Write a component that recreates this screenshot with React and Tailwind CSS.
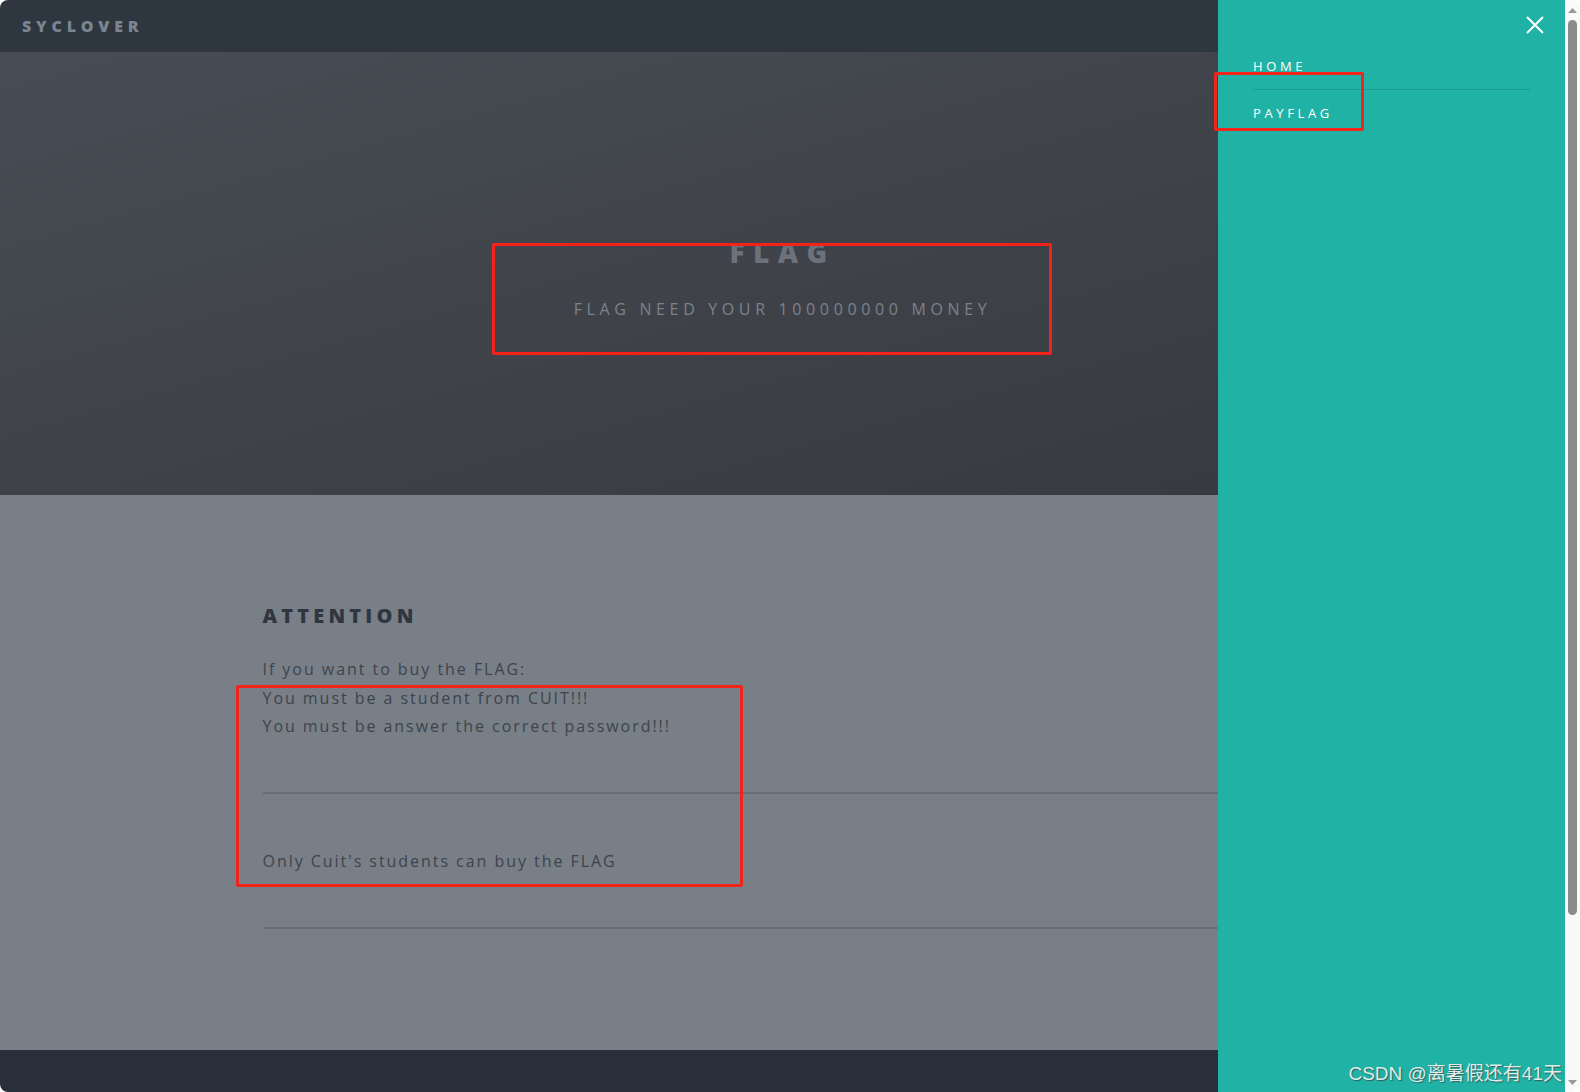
import React from "react";

const font = { fontFamily: '"Open Sans", "Noto Sans", sans-serif' };

function RedBox({ className }) {
  return <div className={"absolute border-[3px] border-[#f2231b] rounded-[2px] pointer-events-none " + className} />;
}

export default function App() {
  return (
    <div className="w-[1580px] h-[1092px] bg-white overflow-hidden">
      <div className="w-full h-full rounded-[8px] overflow-hidden flex" style={font}>
        <div className="relative flex-1 flex flex-col h-full">
          {/* header */}
          <header className="h-[52px] bg-[#2e3640] flex items-center pl-[22px] shrink-0">
            <span className="text-[16px] font-extrabold tracking-[0.3em] text-[#7b8591]">SYCLOVER</span>
          </header>
          {/* hero */}
          <section className="h-[443px] shrink-0 bg-gradient-to-br from-[#484d55] to-[#36383c] flex flex-col items-center pt-[184px]">
            <h1 className="text-[28px] leading-[32px] font-extrabold tracking-[0.3em] text-[#6b727c]">FLAG</h1>
            <p className="mt-[29px] text-[16px] leading-[24px] tracking-[0.29em] text-[#7b828d]">FLAG NEED YOUR 100000000 MONEY</p>
          </section>
          {/* content */}
          <section className="flex-1 bg-[#787f87]">
            <div className="mx-auto w-[1040px] pt-[107px]">
              <h2 className="text-[20px] leading-[28px] font-extrabold tracking-[0.21em] text-[#2f3640]">ATTENTION</h2>
              <div className="mt-[25px] text-[16px] leading-[28.5px] tracking-[0.122em] text-[#3d444d]">
                <p>If you want to buy the FLAG:</p>
                <p>You must be a student from CUIT!!!</p>
                <p>You must be answer the correct password!!!</p>
              </div>
              <div className="mt-[51px] h-[2px] bg-[#676e77]" />
              <p className="mt-[53px] text-[16px] leading-[28px] tracking-[0.122em] text-[#3d444d]">Only Cuit's students can buy the FLAG</p>
              <div className="mt-[52px] h-[2px] bg-[#676e77]" />
            </div>
          </section>
          {/* footer */}
          <footer className="h-[42px] bg-[#282f3a] shrink-0" />

          {/* side menu overlay */}
          <aside className="absolute top-0 right-0 w-[347px] h-full bg-[#20b2a4] px-[35px] pt-[54px]">
            <button className="absolute top-[15px] right-[20px] text-white">
              <svg width="20" height="20" viewBox="0 0 20 20" fill="none" stroke="currentColor" strokeWidth="2">
                <path d="M2 2 L18 18 M18 2 L2 18" />
              </svg>
            </button>
            <nav className="text-white text-[13px] font-medium tracking-[0.28em]">
              <div className="h-[24px] leading-[24px]">HOME</div>
              <div className="mt-[11px] h-px bg-[#1a9b8f]" />
              <div className="mt-[11px] h-[24px] leading-[24px]">PAYFLAG</div>
            </nav>
            <div
              className="absolute right-[3px] bottom-[6px] text-[19px] leading-[24px] text-[#dfece9]"
              style={{ fontFamily: '"Liberation Sans", "Noto Sans CJK SC", sans-serif', textShadow: "1px 1px 1px rgba(60,60,60,0.7)" }}
            >
              CSDN @离暑假还有41天
            </div>
          </aside>

          <RedBox className="left-[492px] top-[243px] w-[560px] h-[112px]" />
          <RedBox className="left-[1214px] top-[72px] w-[150px] h-[59px]" />
          <RedBox className="left-[236px] top-[685px] w-[507px] h-[202px]" />
        </div>
        {/* scrollbar */}
        <div className="w-[15px] h-full bg-[#f9f9f9] flex flex-col items-center shrink-0">
          <div className="h-[20px] flex items-center justify-center">
            <svg width="9" height="5" viewBox="0 0 9 5"><path d="M0 5 L4.5 0 L9 5 Z" fill="#9a9a9a" /></svg>
          </div>
          <div className="w-[9px] h-[895px] rounded-full bg-[#8b8b8b]" />
          <div className="flex-1" />
          <div className="h-[20px] flex items-center justify-center">
            <svg width="9" height="5" viewBox="0 0 9 5"><path d="M0 0 L4.5 5 L9 0 Z" fill="#9a9a9a" /></svg>
          </div>
        </div>
      </div>
    </div>
  );
}
